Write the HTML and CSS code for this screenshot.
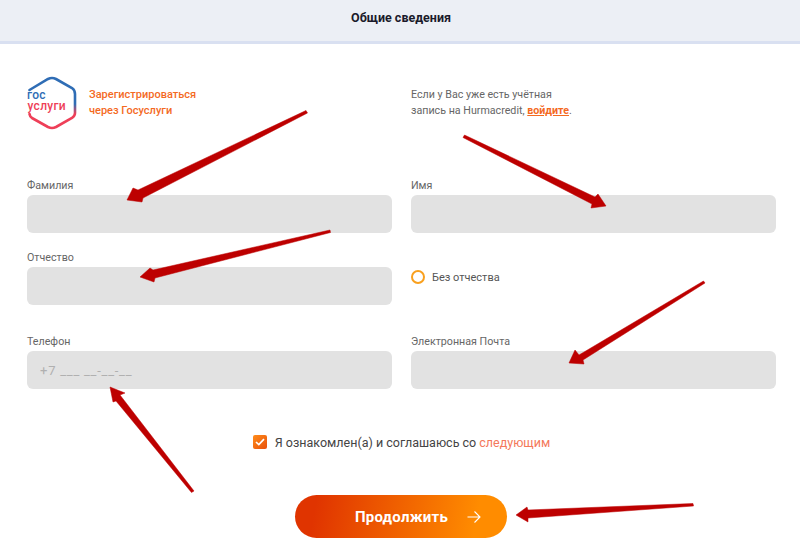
FILE: index.html
```html
<!DOCTYPE html>
<html lang="en">
<head>
    <meta charset="UTF-8">
    <meta name="viewport" content="width=device-width, initial-scale=1.0">
    <title>Общие сведения</title>
    <link rel="stylesheet" href="styles.css">
</head>
<body>
    <div class="top-bar">Общие сведения</div>

    <div class="container">
        <div class="intro">
            <a class="gosuslugi" href="#">
                <svg class="gos-logo" width="50" height="54" viewBox="0 0 50 54">
                    <defs>
                        <linearGradient id="gos-line" gradientUnits="userSpaceOnUse" x1="0" y1="0" x2="0" y2="54">
                            <stop offset="0.52" stop-color="#2f6db5"/>
                            <stop offset="0.7" stop-color="#ee3f58"/>
                        </linearGradient>
                    </defs>
                    <path d="M2.5 14 L21 3 Q25 1 29 3 L45 12 Q48 14 48 18 L48 37 Q48 40 45 42 L29 51 Q25 53 21 51 L5 42 Q3 41 2.5 38" fill="none" stroke="url(#gos-line)" stroke-width="2.6" stroke-linecap="round"/>
                    <text class="gos-top" x="0" y="23">гос</text>
                    <text class="gos-bottom" x="0.5" y="34">услуги</text>
                </svg>
                <span>Зарегистрироваться<br>через Госуслуги</span>
            </a>
            <p class="login-note">
                Если у Вас уже есть учётная<br>
                запись на Hurmacredit, <a href="#">войдите</a>.
            </p>
        </div>

        <form class="fields">
            <div class="field">
                <label for="last-name">Фамилия</label>
                <input type="text" id="last-name">
            </div>
            <div class="field">
                <label for="first-name">Имя</label>
                <input type="text" id="first-name">
            </div>
            <div class="field">
                <label for="middle-name">Отчество</label>
                <input type="text" id="middle-name">
            </div>
            <div class="no-middle">
                <span class="radio"></span>
                <span>Без отчества</span>
            </div>
            <div class="field field-low">
                <label for="phone">Телефон</label>
                <input type="text" id="phone" placeholder="+7 ___ __-__-__">
            </div>
            <div class="field field-low">
                <label for="email">Электронная Почта</label>
                <input type="email" id="email">
            </div>
        </form>

        <div class="agree">
            <span class="check">
                <svg width="10" height="8" viewBox="0 0 10 8"><path d="M1 4 L3.8 6.6 L9 1.2" fill="none" stroke="#fff" stroke-width="1.7"/></svg>
            </span>
            <span>Я ознакомлен(а) и соглашаюсь со <a href="#">следующим</a></span>
        </div>

        <div class="actions">
            <button type="button" class="next">
                Продолжить
                <svg width="14" height="14" viewBox="0 0 14 14"><path d="M0.5 7 H13 M7.5 1.5 L13 7 L7.5 12.5" fill="none" stroke="#fff" stroke-width="1.1"/></svg>
            </button>
        </div>
    </div>

    <!-- red arrows drawn on top of the screenshot -->
    <svg class="arrows" width="800" height="554" viewBox="0 0 800 554">
        <g fill="#bd0000" stroke="#bd0000" stroke-width="0.5" stroke-linejoin="round">
            <path d="M306 110.5 L138 190 L133 188 L127 200 L142 202 L143 198 L307.5 113 Z"/>
            <path d="M330 230 L153 270 L150 268 L140 277 L154 282 L155 278 L330.5 232.5 Z"/>
            <path d="M464.5 135 L595 197 L598 194 L606 206 L591 208 L592 204 L463 137.5 Z"/>
            <path d="M703.5 281 L579 355 L575 350 L569 363 L584 364 L583 360 L705 283 Z"/>
            <path d="M194 491 L120 395 L125 393 L110 387 L113 402 L116 401 L191.5 492.5 Z"/>
            <path d="M693 503.5 L528 510 L527 507 L516 515 L528 522 L528 518 L693.5 506 Z"/>
        </g>
    </svg>
</body>
</html>
```

FILE: styles.css
```css
html, body {
    height: 100%;
}

body {
    margin: 0;
    position: relative;
    overflow: hidden;
    background: #fff;
    font-family: Roboto, "Liberation Sans", sans-serif;
    font-size: 10.7px;
    color: #666;
}

.top-bar {
    height: 44px;
    padding-left: 2px;
    line-height: 36px;
    text-align: center;
    background: #eceff5;
    border-bottom: 3px solid #d9e0f1;
    box-sizing: border-box;
    font-size: 12.5px;
    font-weight: 700;
    color: #1a1a2a;
}

.container {
    padding: 32px 24px 0 27px;
}

.intro {
    display: grid;
    grid-template-columns: 1fr 1fr;
    column-gap: 19px;
    height: 54px;
}

.gosuslugi {
    display: flex;
    align-items: center;
    gap: 12px;
    font-size: 11px;
    font-weight: 500;
    line-height: 16px;
    color: #f46a1f;
    text-decoration: none;
}

.gos-logo {
    flex: none;
}

.gos-top,
.gos-bottom {
    font-size: 12px;
    font-weight: 500;
    letter-spacing: 0.3px;
}

.gos-top {
    fill: #2f6db5;
}

.gos-bottom {
    fill: #ee3f58;
}

.login-note {
    margin: 11px 0 0;
    line-height: 16px;
}

.login-note a {
    font-weight: 700;
    color: #f46a1f;
}

.fields {
    display: grid;
    grid-template-columns: 1fr 1fr;
    column-gap: 19px;
    row-gap: 17px;
    margin-top: 48px;
}

.field {
    display: flex;
    flex-direction: column;
}

.field-low {
    margin-top: 12px;
}

.field label {
    height: 14px;
    line-height: 16px;
    margin-bottom: 3px;
}

.field input {
    height: 38px;
    box-sizing: border-box;
    padding: 0 13px;
    border: none;
    border-radius: 6px;
    background: #e2e2e2;
    font-family: inherit;
    font-size: 13px;
    letter-spacing: 0.75px;
}

.field input::placeholder {
    color: #b0b0b0;
}

.no-middle {
    display: flex;
    align-items: center;
    gap: 7px;
    height: 20px;
    margin-top: 17px;
    font-size: 11px;
    color: #555;
}

.radio {
    box-sizing: border-box;
    width: 14px;
    height: 14px;
    border: 2px solid #f9a01e;
    border-radius: 50%;
    background: #fff;
}

.agree {
    display: flex;
    align-items: center;
    justify-content: center;
    gap: 8px;
    margin-top: 45px;
    height: 16px;
    font-size: 12.5px;
    color: #444;
}

.agree a {
    color: #f4785a;
    text-decoration: none;
}

.check {
    display: flex;
    align-items: center;
    justify-content: center;
    width: 14px;
    height: 14px;
    border-radius: 2px;
    background: linear-gradient(135deg, #ff8c1a, #e8500c);
}

.actions {
    display: flex;
    justify-content: center;
    margin-top: 45px;
    padding-right: 1px;
}

.next {
    display: flex;
    align-items: center;
    justify-content: center;
    gap: 19px;
    width: 212px;
    height: 43px;
    padding: 0 0 0 34px;
    border: none;
    border-radius: 22px;
    background: linear-gradient(100deg, #e03400 10%, #ff8c00 85%);
    color: #fff;
    font-family: inherit;
    font-size: 15px;
    font-weight: 700;
    letter-spacing: 0.25px;
    cursor: pointer;
}

.arrows {
    position: absolute;
    left: 0;
    top: 0;
    pointer-events: none;
}
```
